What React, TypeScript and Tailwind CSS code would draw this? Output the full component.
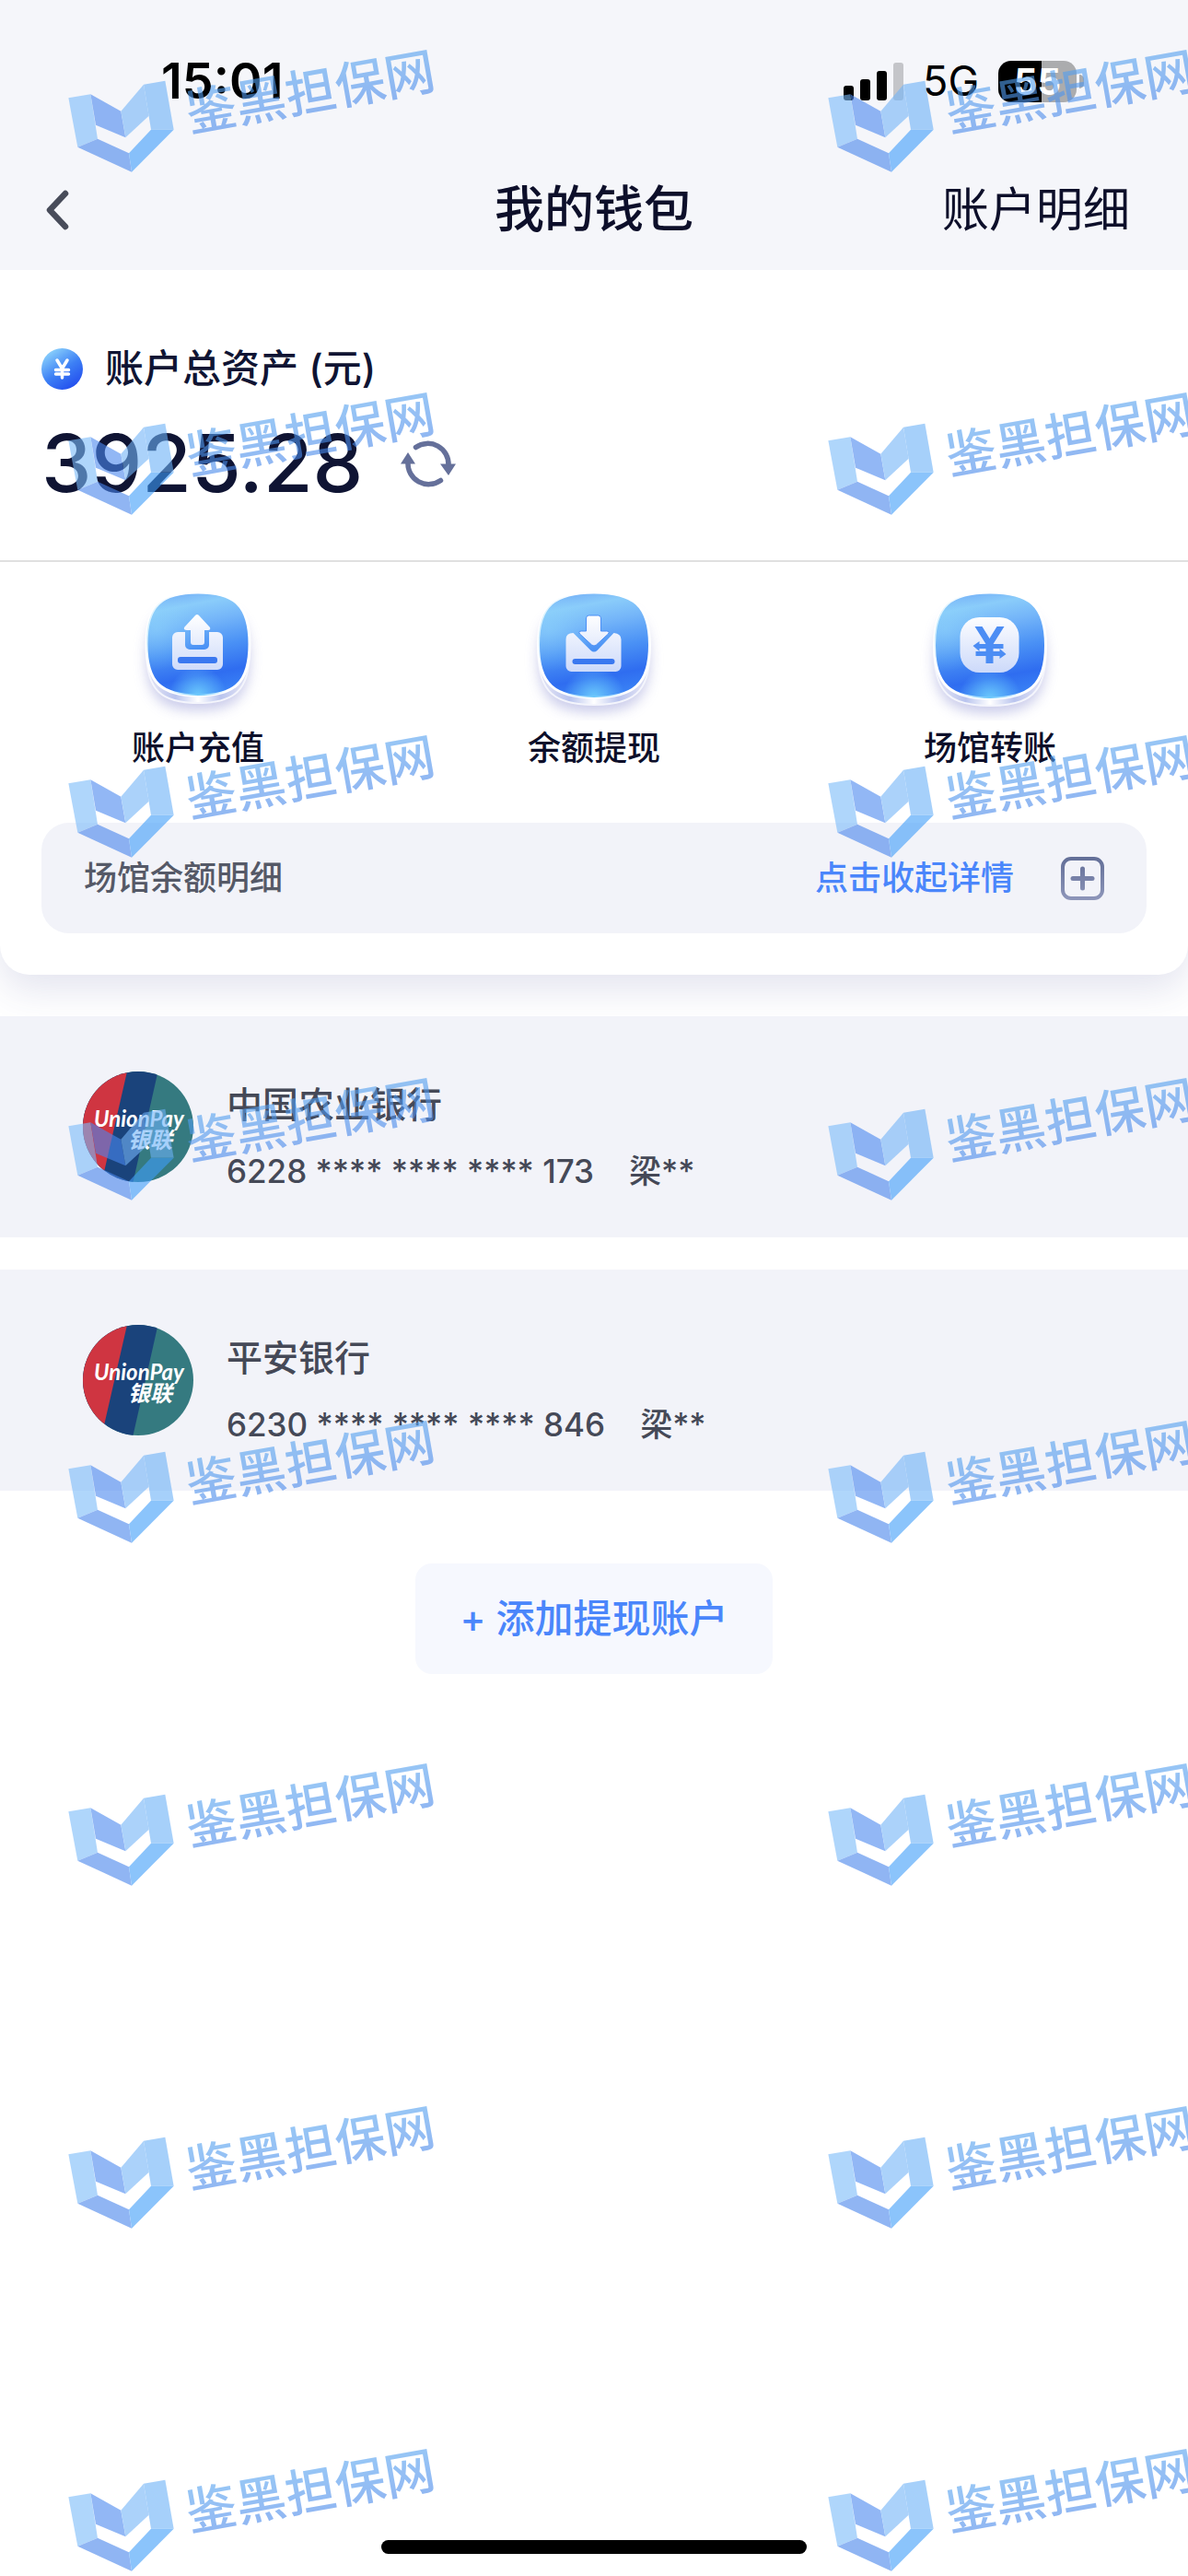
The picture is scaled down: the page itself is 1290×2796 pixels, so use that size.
import { useState } from 'react';
import type { ReactNode } from 'react';

const accounts = [
  { bank: '中国农业银行', number: '6228 **** **** **** 173', owner: '梁**' },
  { bank: '平安银行', number: '6230 **** **** **** 846', owner: '梁**' },
];

const signalBars = ['h-[16px] bg-black', 'h-[23px] bg-black', 'h-[32px] bg-black', 'h-[41px] bg-[#c4c5c9]'];

function StatusBar() {
  return (
    <div className="flex h-[162px] items-center justify-between pt-[14px] pr-[113px] pl-[175px] text-black">
      <span className="text-[54px] leading-[60px] font-semibold">15:01</span>
      <div className="flex items-center">
        <div className="flex h-[41px] items-end gap-[7px]">
          {signalBars.map((bar) => (
            <span key={bar} className={`w-[11px] rounded-[3px] ${bar}`} />
          ))}
        </div>
        <span className="ml-[21px] text-[45px] leading-[60px]">5G</span>
        <div className="ml-[21px] flex h-[45px] w-[85px] items-center justify-center rounded-[14px] bg-linear-to-r from-black from-55% to-[#abacae] to-55% text-[40px] leading-[45px] font-bold text-white">
          55
        </div>
        <span className="ml-[3px] h-[15px] w-[5px] rounded-r-full bg-[#abacae]" />
      </div>
    </div>
  );
}

function CoinIcon() {
  return (
    <svg className="size-[45px]" viewBox="0 0 45 45">
      <defs>
        <linearGradient id="coin" x1="0.15" y1="0.05" x2="0.75" y2="0.95">
          <stop offset="0" stopColor="#8fd6fc" />
          <stop offset="0.55" stopColor="#3d80f5" />
          <stop offset="1" stopColor="#2450ee" />
        </linearGradient>
      </defs>
      <circle cx="22.5" cy="22.5" r="22.5" fill="url(#coin)" />
      <path d="M17 13l5.5 9 5.5-9M22.5 22v10M15.5 23.500h14M15.5 28h14" fill="none" stroke="#fff" strokeWidth="3.5" strokeLinecap="round" strokeLinejoin="round" />
    </svg>
  );
}

function RefreshIcon() {
  return (
    <svg className="h-[53px] w-[60px]" viewBox="0 0 60 53">
      <g fill="none" stroke="#65709a" strokeWidth="5.5" strokeLinecap="round">
        <path d="M16.500 8.500A22.500 22.500 0 0 1 52 28" />
        <path d="M43.500 44.500A22.500 22.500 0 0 1 8 25" />
      </g>
      <path d="M43 26.500h17L52 39zM0 26.500h16L8 14z" fill="#65709a" />
    </svg>
  );
}

type TileProps = {
  id: string;
  width: number;
  height: number;
  children: ReactNode;
};

// glossy tile the three action glyphs sit on
function ActionTile({ id, width: w, height: h, children }: TileProps) {
  const shape = `M${w / 2} 0C${w * 0.85} 0 ${w} ${h * 0.12} ${w} ${h / 2}S${w * 0.85} ${h} ${w / 2} ${h}S0 ${h * 0.88} 0 ${h / 2}S${w * 0.15} 0 ${w / 2} 0Z`;
  return (
    <svg className="size-[160px]" viewBox="0 0 160 160">
      <defs>
        <linearGradient id={`${id}-body`} x1="0.4" y1="0" x2="0.6" y2="1">
          <stop offset="0" stopColor="#78b4f8" />
          <stop offset="0.12" stopColor="#8accfa" />
          <stop offset="0.3" stopColor="#74b5f9" />
          <stop offset="0.55" stopColor="#4a91f5" />
          <stop offset="0.8" stopColor="#2f6df0" />
          <stop offset="1" stopColor="#3a83f5" />
        </linearGradient>
        <radialGradient id={`${id}-glow`} cx="0.5" cy="1" r="0.28">
          <stop offset="0" stopColor="#6ac8fc" />
          <stop offset="1" stopColor="#6ac8fc" stopOpacity="0" />
        </radialGradient>
        <radialGradient id={`${id}-shine`} cx="0.1" cy="0.35" r="0.4">
          <stop offset="0" stopColor="#8ed6fb" stopOpacity="0.5" />
          <stop offset="1" stopColor="#8ed6fb" stopOpacity="0" />
        </radialGradient>
        <linearGradient id={`${id}-lip`}>
          <stop offset="0.1" stopColor="#d9dcf3" />
          <stop offset="0.28" stopColor="#b9c4ee" />
          <stop offset="0.5" stopColor="#ffffff" />
          <stop offset="0.72" stopColor="#b9c4ee" />
          <stop offset="0.9" stopColor="#d9dcf3" />
        </linearGradient>
        <linearGradient id={`${id}-glyph`} gradientUnits="userSpaceOnUse" x1="0" y1="24" x2="0" y2="86">
          <stop offset="0" stopColor="#ffffff" />
          <stop offset="1" stopColor="#cddafa" />
        </linearGradient>
        <filter id={`${id}-blur`} x="-30%" y="-30%" width="160%" height="160%">
          <feGaussianBlur stdDeviation="7" />
        </filter>
      </defs>
      <g transform={`translate(${80 - w / 2} 21)`}>
        <path d={shape} transform="translate(0 16)" fill="#c4c6e8" opacity="0.9" filter={`url(#${id}-blur)`} />
        <path d={shape} transform="translate(0 8)" fill={`url(#${id}-lip)`} stroke="#f4f5fc" strokeWidth="2" />
        <path d={shape} fill={`url(#${id}-body)`} stroke="#fff" strokeWidth="3" />
        <path d={shape} fill={`url(#${id}-shine)`} />
        <path d={shape} fill={`url(#${id}-glow)`} />
        <g fill={`url(#${id}-glyph)`}>{children}</g>
      </g>
    </svg>
  );
}

function DepositIcon() {
  return (
    <ActionTile id="deposit" width={112} height={112}>
      <path d="M34 43h8v14a5 5 0 0 0 5 5h16a5 5 0 0 0 5-5V43h9a6 6 0 0 1 6 6v29a6 6 0 0 1-6 6H34a6 6 0 0 1-6-6V49a6 6 0 0 1 6-6z" />
      <path d="M53 25q2-2 4 0l12 13q1 3-2 3h-4v13a3 3 0 0 1-3 3h-9a3 3 0 0 1-3-3V41h-4q-4 0-3-3z" />
      <rect x="34" y="70" width="43" height="7" rx="3" fill="#3a78f0" />
    </ActionTile>
  );
}

function WithdrawIcon() {
  return (
    <ActionTile id="withdraw" width={121} height={114}>
      <path d="M38 44l19 19q3.500 3 7 0l18-19q8 1 8 7v29a6 6 0 0 1-6 6H36a6 6 0 0 1-6-6V51q0-7 8-7z" />
      <path d="M55 25h10a3 3 0 0 1 3 3v14h6q4 0 2 3L63 57q-2.500 2-5 0L45 45q-2-3 2-3h5V28a3 3 0 0 1 3-3z" stroke="#4a8ef5" strokeWidth="1" />
      <rect x="37" y="72" width="46" height="6" rx="3" fill="#3a78f0" />
    </ActionTile>
  );
}

function TransferIcon() {
  return (
    <ActionTile id="transfer" width={121} height={115}>
      <rect x="28" y="27" width="64" height="60" rx="21" />
      <g fill="#4c8df4">
        <path d="M44 37h8l8 13 8-13h8L64 56v21h-8V56z" />
        <path d="M42 58l7-5v3h26v5H49v3zM78 67l-7 5v-3H45v-5h26v-3z" />
      </g>
    </ActionTile>
  );
}

function PlusBoxIcon() {
  return (
    <svg className="size-[47px]" viewBox="0 0 47 47">
      <defs>
        <linearGradient id="plus-box" gradientUnits="userSpaceOnUse" x1="0" y1="0" x2="0" y2="47">
          <stop offset="0" stopColor="#626e97" />
          <stop offset="1" stopColor="#8e96ba" />
        </linearGradient>
      </defs>
      <rect x="2" y="2" width="43" height="43" rx="9" fill="none" stroke="url(#plus-box)" strokeWidth="4" />
      <rect x="10.5" y="21" width="26" height="5" rx="2.5" fill="url(#plus-box)" />
      <rect x="21" y="10.5" width="5" height="26" rx="2.5" fill="url(#plus-box)" />
    </svg>
  );
}

function UnionPayLogo() {
  return (
    <svg className="size-[120px] shrink-0 rounded-full" viewBox="0 0 120 120">
      <rect width="120" height="120" fill="#357a80" />
      <path d="M0 0h81.500L54.500 120H0z" fill="#1a437b" />
      <path d="M0 0h48L20.500 120H0z" fill="#cf3541" />
      <g fill="#fff" fontStyle="italic" fontWeight="700">
        <text x="12" y="60" fontSize="24" fontFamily="Lato, sans-serif">UnionPay</text>
        <text x="49" y="83" fontSize="24" fontFamily="'Noto Sans CJK SC', sans-serif">银联</text>
      </g>
    </svg>
  );
}

function Watermark() {
  return (
    <svg className="mt-[40px] ml-[60px] h-[160px] w-[430px] overflow-visible opacity-60" viewBox="0 0 1290 480">
      <defs>
        <linearGradient id="mark-text" x1="0" y1="0" x2="0" y2="1">
          <stop offset="0.2" stopColor="#54a2f0" />
          <stop offset="1" stopColor="#4683ea" />
        </linearGradient>
      </defs>
      <path d="M43 199L115 187L138 332L73 359z" fill="#7bbbfa" />
      <path d="M115 187L214 242L229 328L132 287z" fill="#4a88f0" />
      <path d="M288 155L214 242L229 328L305 257z" fill="#74b5f8" />
      <path d="M288 155L358 143L386 302L312 302z" fill="#6cb1f7" />
      <path d="M138 332L240 379L249 440L73 359z" fill="#4885ec" />
      <path d="M312 302H386L249 440L240 379z" fill="#3f9dfa" />
      <text transform="translate(438 309) rotate(-10)" fontSize="164" fontWeight="500" fontFamily="'Noto Sans CJK SC', sans-serif" fill="url(#mark-text)">
        鉴黑担保网
      </text>
    </svg>
  );
}

const actions = [
  { label: '账户充值', Icon: DepositIcon },
  { label: '余额提现', Icon: WithdrawIcon },
  { label: '场馆转账', Icon: TransferIcon },
];

export default function App() {
  const [open, setOpen] = useState(true);

  return (
    <div className="relative flex min-h-screen flex-col bg-white font-[Inter,'Noto_Sans_CJK_SC',sans-serif] text-[#0d0f2a]">
      <header className="relative z-10 bg-[#f5f6fa]">
        <StatusBar />
        <nav className="grid h-[131px] grid-cols-3 items-center">
          <button type="button" aria-label="返回" className="justify-self-start pl-[50px]">
            <svg className="h-[44px] w-[25px]" viewBox="0 0 25 44" fill="none" stroke="#484c5a" strokeWidth="6.5" strokeLinecap="round" strokeLinejoin="round">
              <path d="M21 4L4 22l17 18" />
            </svg>
          </button>
          <h1 className="text-center text-[54px] leading-[60px] font-medium">我的钱包</h1>
          <a href="#detail" className="justify-self-end pr-[63px] text-[51px] leading-[60px]">账户明细</a>
        </nav>
      </header>

      <section className="rounded-b-[32px] bg-white pb-[45px] shadow-[0_16px_40px_rgba(60,65,140,0.14)]">
        <div className="border-b-2 border-[#e0e0e0] px-[45px] pt-[83px] pb-[60px]">
          <div className="flex h-[48px] items-center gap-[24px]">
            <CoinIcon />
            <h2 className="text-[42px] leading-[48px] font-medium text-[#0f1433]">账户总资产 (元)</h2>
          </div>
          <div className="mt-[34px] flex h-[90px] items-center gap-[41px]">
            <span className="text-[87px] leading-[90px] font-medium text-[#0f1433]">3925.28</span>
            <button type="button" aria-label="刷新">
              <RefreshIcon />
            </button>
          </div>
        </div>

        <div className="grid grid-cols-3 pt-[12px]">
          {actions.map(({ label, Icon }) => (
            <button key={label} type="button" className="flex flex-col items-center gap-[5px]">
              <Icon />
              <span className="text-[36px] leading-[50px] font-medium">{label}</span>
            </button>
          ))}
        </div>

        <div className="mx-[45px] mt-[56px] flex h-[120px] items-center justify-between rounded-[30px] bg-[#f2f3f9] px-[46px] text-[36px] leading-[50px] font-medium">
          <span className="text-[#555967]">场馆余额明细</span>
          <button type="button" aria-expanded={open} onClick={() => setOpen(!open)} className="flex items-center gap-[51px] text-[#4a86fb]">
            点击收起详情
            <PlusBoxIcon />
          </button>
        </div>
      </section>

      <ul className="mt-[45px] flex flex-col gap-[35px]">
        {accounts.map((account) => (
          <li key={account.number} className="flex gap-[36px] bg-[#f2f3f9] px-[90px] pt-[60px] pb-[48px] text-[#454957]">
            <UnionPayLogo />
            <div className="flex flex-col gap-[24px] pt-[12px]">
              <h3 className="text-[39px] leading-[48px] font-medium">{account.bank}</h3>
              <p className="flex gap-[38px] text-[35px] leading-[48px] font-medium">
                <span>{account.number}</span>
                <span>{account.owner}</span>
              </p>
            </div>
          </li>
        ))}
      </ul>

      <button type="button" className="mt-[79px] h-[120px] self-center rounded-[18px] bg-[#f6f8fe] px-[48px] text-[42px] leading-[60px] font-medium text-[#4a86fb]">
        + 添加提现账户
      </button>

      <div className="mt-auto mb-[24px] h-[15px] w-[462px] self-center rounded-full bg-black" />

      <div aria-hidden="true" className="pointer-events-none absolute inset-0 z-20 grid auto-rows-[372px] grid-cols-[825px_825px] overflow-hidden">
        {Array.from({ length: 16 }, (_, i) => (
          <Watermark key={i} />
        ))}
      </div>
    </div>
  );
}
